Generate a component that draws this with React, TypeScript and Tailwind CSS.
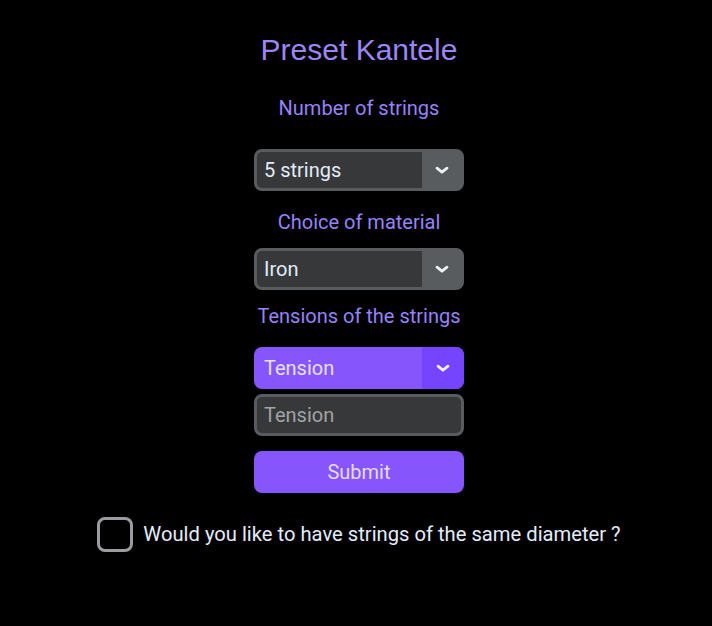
function Chevron() {
  return (
    <svg width="14" height="9" viewBox="0 0 14 9" fill="none">
      <polyline points="2,2.2 7,6.2 12,2.2" stroke="#eef0f4" strokeWidth="2.8" strokeLinecap="round" strokeLinejoin="round" />
    </svg>
  );
}

function Select({ value, purple }: { value: string; purple?: boolean }) {
  if (purple)
    return (
      <div className="w-[210px] h-[42px] rounded-lg bg-[#8656fc] overflow-hidden flex flex-row">
        <div className="flex-1 flex items-center pl-[10px] text-[20px] text-[#e6e0ff]">{value}</div>
        <div className="w-[42px] h-full bg-[#7544fe] flex items-center justify-center">
          <Chevron />
        </div>
      </div>
    );

  return (
    <div className="w-[210px] h-[42px] rounded-lg border-[3px] border-[#585c5f] bg-[#585c5f] overflow-hidden flex flex-row">
      <div className="flex-1 bg-[#36383a] flex items-center pl-[7px] text-[20px] text-[#e4ecfa]">{value}</div>
      <div className="w-[39px] h-full flex items-center justify-center">
        <Chevron />
      </div>
    </div>
  );
}

function Label({ text, className }: { text: string; className: string }) {
  return <div className={"h-[28px] leading-[28px] text-[20px] text-[#9683f8] " + className}>{text}</div>;
}

export default function App() {
  return (
    <div className="w-[712px] h-[626px] bg-black flex flex-col items-center pt-[30px] pl-[6px] font-['Roboto',sans-serif]">
      <div className="h-[40px] leading-[40px] text-[30px] text-[#9c86f6] font-['Liberation_Sans',Arial,sans-serif]">
        Preset Kantele
      </div>
      <Label text="Number of strings" className="mt-[24px]" />
      <div className="mt-[27px]">
        <Select value="5 strings" />
      </div>
      <Label text="Choice of material" className="mt-[17px]" />
      <div className="mt-[12px]">
        <Select value="Iron" />
      </div>
      <Label text="Tensions of the strings" className="mt-[12px]" />
      <div className="mt-[17px]">
        <Select value="Tension" purple />
      </div>
      <input
        placeholder="Tension"
        className="mt-[5px] w-[210px] h-[42px] rounded-lg border-[3px] border-[#585c5f] bg-[#36383a] pl-[7px] text-[20px] text-[#e4ecfa] placeholder:text-[#a3a3a3] outline-none"
      />
      <button className="mt-[15px] w-[210px] h-[42px] rounded-lg bg-[#8656fc] text-[20px] text-[#e3dcff]">Submit</button>
      <label className="mt-[24px] flex flex-row items-center gap-[10px]">
        <span className="w-[36px] h-[35px] rounded-lg border-[3px] border-[#9a9ca0] bg-black" />
        <span className="text-[20.2px] text-[#e3ecfb]">Would you like to have strings of the same diameter ?</span>
      </label>
    </div>
  );
}
